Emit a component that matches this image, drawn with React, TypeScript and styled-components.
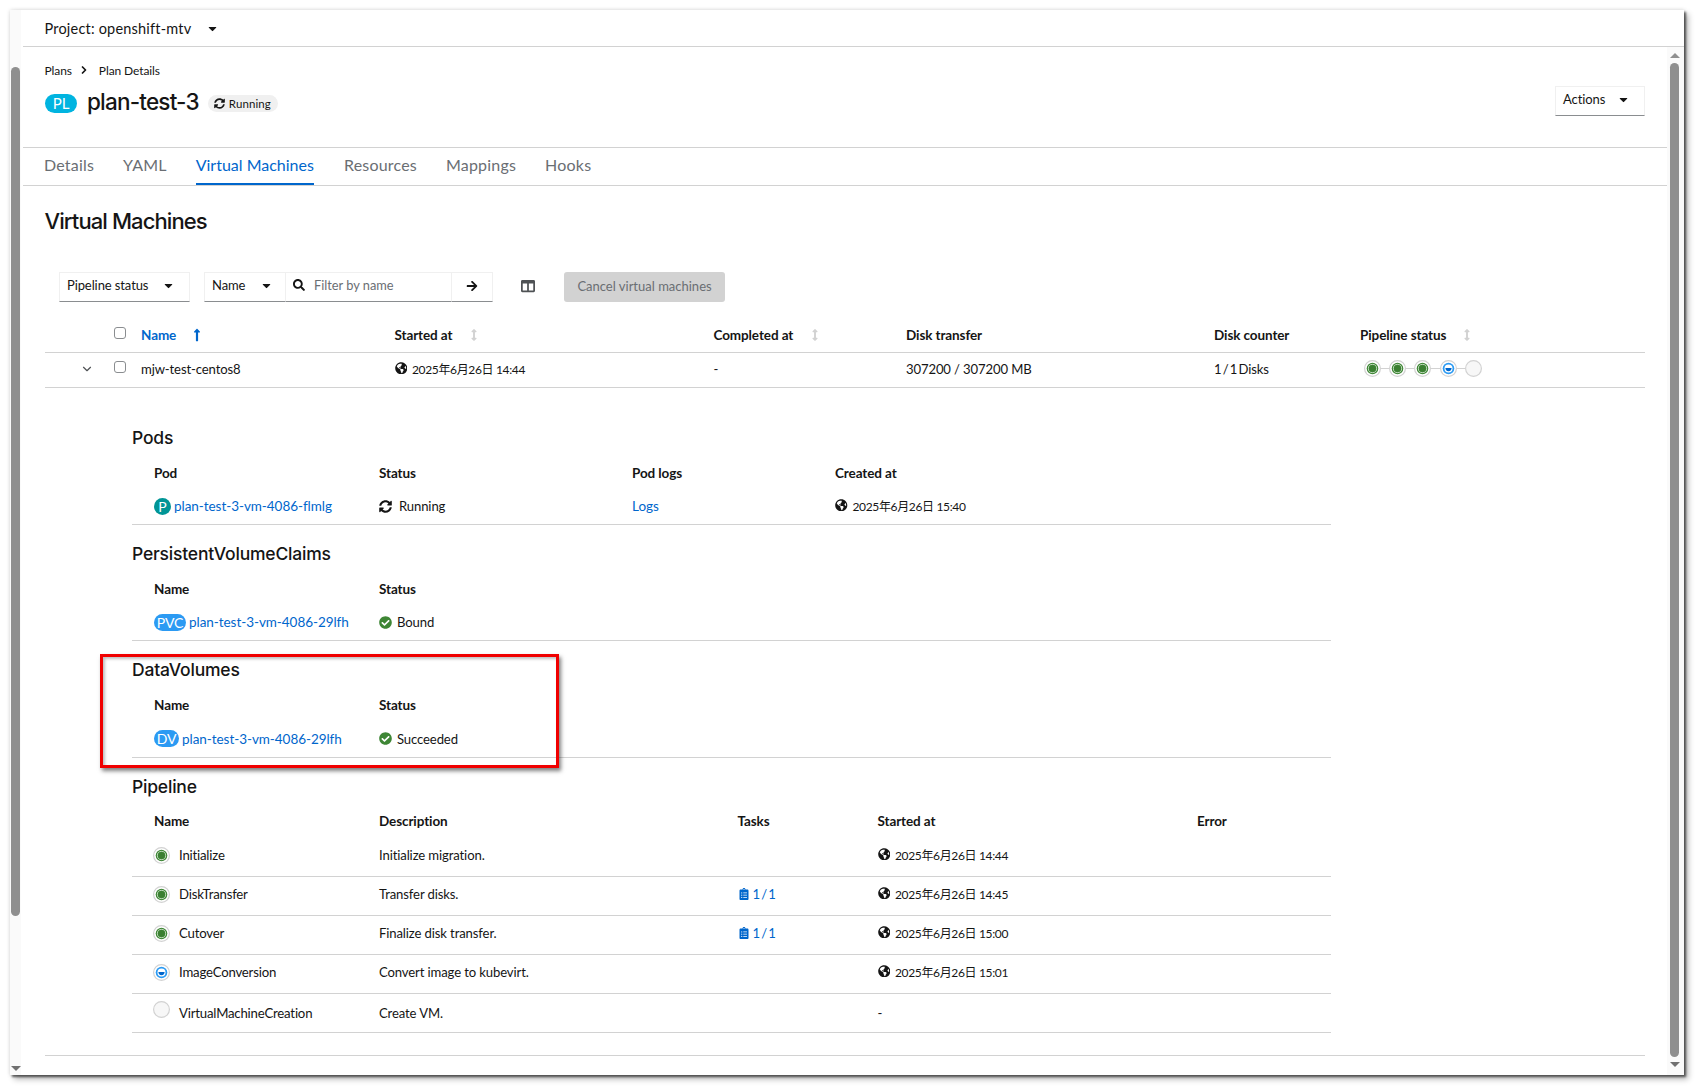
import React from "react";
import styled, { createGlobalStyle } from "styled-components";
import {
  FaArrowRight,
  FaArrowsAltV,
  FaCaretDown,
  FaCheckCircle,
  FaClipboardList,
  FaColumns,
  FaGlobeAmericas,
  FaLongArrowAltUp,
  FaSearch,
  FaSyncAlt,
} from "react-icons/fa";
import { LuChevronDown, LuChevronRight } from "react-icons/lu";

const BODY_FONT = `"Lato", "Noto Sans CJK JP", sans-serif`;
const BLUE = "#0066cc";
const LINE = "#d2d2d2";

const GlobalStyle = createGlobalStyle`
  html, body {
    margin: 0;
    background: #fff;
    overflow: hidden;
  }
  body {
    font-family: ${BODY_FONT};
    font-size: 14px;
    color: #151515;
  }
`;

const Screen = styled.div`
  width: 1695px;
  height: 1086px;
  padding: 10px 0 0 10px;
  box-sizing: border-box;
`;

const Card = styled.div`
  display: flex;
  width: 1674px;
  height: 1065px;
  background: #fff;
  box-shadow: 2px 2px 2px rgba(0, 0, 0, 0.55), 4px 4px 6px rgba(0, 0, 0, 0.3), 0 0 4px rgba(0, 0, 0, 0.15);
`;

const LeftRail = styled.div`
  display: flex;
  flex-direction: column;
  align-items: center;
  width: 11px;
  margin-right: 2px;
  padding-top: 57px;
  background: #fafafa;
`;

const RightRail = styled.div`
  display: flex;
  flex-direction: column;
  align-items: center;
  width: 17px;
  padding: 6px 5px 0 3px;
  box-sizing: border-box;
  background: #fafafa;
`;

const Thumb = styled.div<{ $height: number }>`
  flex: none;
  width: 9px;
  height: ${(p) => p.$height}px;
  border-radius: 5px;
  background: #8f8f8f;
`;

const ArrowUp = styled.div`
  width: 0;
  height: 0;
  margin-bottom: 5px;
  border-left: 5px solid transparent;
  border-right: 5px solid transparent;
  border-bottom: 5px solid #8f8f8f;
`;

const ArrowDown = styled.div<{ $gap: number }>`
  width: 0;
  height: 0;
  margin-top: ${(p) => p.$gap}px;
  border-left: 5px solid transparent;
  border-right: 5px solid transparent;
  border-top: 5px solid #707070;
`;

const Column = styled.div`
  display: flex;
  flex-direction: column;
  flex: 1;
  min-width: 0;
`;

const ProjectBar = styled.div`
  display: flex;
  align-items: center;
  height: 36px;
  padding: 0 22px 0 21.5px;
  border-bottom: 1px solid ${LINE};
  font-size: 14.5px;
  letter-spacing: 0.2px;
`;

const ProjectCaret = styled(FaCaretDown)`
  margin-left: 15px;
  font-size: 13px;
`;

const Body = styled.div`
  display: flex;
  flex: 1;
  min-height: 0;
`;

const Content = styled.main`
  flex: 1;
  min-width: 0;
`;

const PageHead = styled.header`
  display: flex;
  justify-content: space-between;
  height: 100px;
  padding: 0 22px 0 21.5px;
  box-sizing: border-box;
`;

const Breadcrumb = styled.nav`
  display: flex;
  align-items: center;
  height: 16px;
  margin-top: 15px;
  font-size: 12px;
  letter-spacing: -0.1px;
`;

const Crumb = styled(LuChevronRight)`
  margin: 0 9px 0 6px;
  font-size: 12px;
  stroke-width: 3.5;
`;

const TitleRow = styled.div`
  display: flex;
  align-items: center;
  height: 30px;
  margin-top: 9px;
`;

const Badge = styled.span<{ $bg: string; $width: number; $height: number; $size: number }>`
  display: inline-flex;
  flex: none;
  align-items: center;
  justify-content: center;
  box-sizing: border-box;
  width: ${(p) => p.$width}px;
  height: ${(p) => p.$height}px;
  border-radius: 10px;
  background: ${(p) => p.$bg};
  color: #fff;
  font-size: ${(p) => p.$size}px;
`;

const TitleBadge = styled(Badge)`
  margin-top: 2px;
  margin-left: 0.5px;
`;

const Title = styled.h1`
  margin: 0 9px 0 10px;
  font-family: "Inter", sans-serif;
  font-size: 22.5px;
  font-weight: 500;
  letter-spacing: -0.8px;
  line-height: 30px;
`;

const StatusPill = styled.span`
  display: inline-flex;
  align-items: center;
  gap: 4px;
  height: 17px;
  margin-top: 2px;
  padding: 0 7px 0 6px;
  border-radius: 9px;
  background: #f0f0f0;
  font-size: 11.5px;
  letter-spacing: 0.1px;
`;

const SelectBox = styled.div<{ $width: number; $right?: number }>`
  display: flex;
  align-items: center;
  justify-content: space-between;
  box-sizing: border-box;
  width: ${(p) => p.$width}px;
  height: 30px;
  padding: 0 ${(p) => p.$right ?? 14}px 4px 7px;
  border: 1px solid #f0f0f0;
  border-bottom-color: #8a8d90;
  background: #fff;
  font-size: 13px;
  letter-spacing: -0.1px;
`;

const ActionsBox = styled(SelectBox)`
  margin-top: 39px;
`;

const Tabs = styled.div`
  display: flex;
  height: 37px;
  padding-left: 6.5px;
  border-top: 1px solid ${LINE};
  border-bottom: 1px solid ${LINE};
`;

const Tab = styled.div<{ $active?: boolean }>`
  display: flex;
  align-items: center;
  margin: 0 ${(p) => (p.$active ? 15.5 : 14.5)}px 0 14.5px;
  padding-bottom: 3px;
  box-sizing: border-box;
  height: 37px;
  border-bottom: 2px solid ${(p) => (p.$active ? BLUE : "transparent")};
  color: ${(p) => (p.$active ? BLUE : "#6a6e73")};
  font-size: 16px;
  letter-spacing: ${(p) => (p.$active ? "0" : "0.2px")};
`;

const Section = styled.section`
  padding: 20px 22px 0 22px;
`;

const PageTitle = styled.h2`
  margin: 0 0 0 -0.5px;
  font-family: "Inter", sans-serif;
  font-size: 22px;
  font-weight: 500;
  letter-spacing: -0.9px;
  line-height: 30px;
`;

const Toolbar = styled.div`
  display: flex;
  align-items: center;
  margin: 36px 0 0 14px;
`;

const SearchGroup = styled.div`
  display: flex;
  margin-left: 14px;
`;

const SearchField = styled.div`
  display: flex;
  align-items: center;
  box-sizing: border-box;
  width: 165px;
  height: 30px;
  padding: 0 0 4px 7px;
  border-top: 1px solid #f0f0f0;
  border-bottom: 1px solid #8a8d90;
  color: #6a6e73;
  font-size: 12.8px;
`;

const SearchIcon = styled(FaSearch)`
  margin-right: 9px;
  color: #151515;
  font-size: 12px;
`;

const GoButton = styled.div`
  display: flex;
  align-items: center;
  justify-content: center;
  box-sizing: border-box;
  width: 42px;
  height: 30px;
  padding-bottom: 3px;
  border: 1px solid #f0f0f0;
  border-bottom-color: #8a8d90;
  font-size: 12px;
`;

const ColumnsIcon = styled(FaColumns)`
  margin: 0 29px 3px 28px;
  color: #4f5255;
  font-size: 14px;
`;

const CancelButton = styled.div`
  display: flex;
  align-items: center;
  justify-content: center;
  width: 161px;
  height: 30px;
  padding-bottom: 3px;
  box-sizing: border-box;
  border-radius: 3px;
  background: #d2d2d2;
  color: #6a6e73;
  font-size: 13px;
`;

const TableRow = styled.div<{
  $cols: string;
  $height: number;
  $border?: boolean;
  $pad?: number;
  $lift?: number;
}>`
  display: grid;
  grid-template-columns: ${(p) => p.$cols};
  align-items: center;
  box-sizing: content-box;
  height: ${(p) => p.$height}px;
  padding-top: ${(p) => p.$pad ?? 0}px;
  padding-bottom: ${(p) => p.$lift ?? 0}px;
  border-bottom: ${(p) => (p.$border ? `1px solid ${LINE}` : "none")};
`;

const HeaderCell = styled.div<{ $active?: boolean }>`
  display: flex;
  align-items: center;
  color: ${(p) => (p.$active ? BLUE : "#151515")};
  font-weight: 700;
  font-size: 13.5px;
  letter-spacing: -0.1px;
`;

const BodyCell = styled.div`
  display: flex;
  align-items: center;
  font-size: 13.1px;
  letter-spacing: -0.12px;
`;

const ExpandCell = styled.div`
  display: flex;
  justify-content: flex-end;
  padding-right: 20.5px;
  font-size: 14px;
  color: #4f5255;
`;

const CheckCell = styled.div`
  display: flex;
  align-items: center;
  margin: -4px 0 0 -0.5px;
`;

const CheckBox = styled.span`
  display: block;
  box-sizing: border-box;
  width: 12px;
  height: 12px;
  border: 1px solid #8a8d90;
  border-radius: 3px;
  background: #fff;
`;

const SortedIcon = styled(FaLongArrowAltUp)`
  margin-left: 14px;
  font-size: 14px;
`;

const SortIcon = styled(FaArrowsAltV)<{ $gap: number }>`
  margin-left: ${(p) => p.$gap}px;
  color: #d2d2d2;
  font-size: 12px;
`;

const DateStamp = styled.span`
  display: inline-flex;
  align-items: center;
  gap: 5px;
  margin-bottom: 2px;
  font-size: 12px;
  letter-spacing: -0.35px;
`;

const GlobeIcon = styled(FaGlobeAmericas)`
  font-size: 12.5px;
`;

const DiskCount = styled.span`
  word-spacing: -2px;
`;

const StepTrack = styled.div`
  display: flex;
  align-items: center;
  margin: -2px 0 0 4px;
`;

const StepLink = styled.span`
  width: 8.2px;
  height: 1px;
  background: ${LINE};
`;

const Details = styled.div`
  margin-left: 87px;
  width: 1199px;
  padding-top: 21px;
`;

const SubSection = styled.section`
  position: relative;
  padding-top: 16px;
`;

const SubTitle = styled.h3`
  margin: 0 0 7px 0;
  font-family: "Inter", sans-serif;
  font-size: 17.5px;
  font-weight: 500;
  letter-spacing: -0.2px;
  line-height: 26px;
`;

const SubRow = styled(TableRow)`
  padding-left: 22px;
`;

const LinkText = styled.a<{ $gap?: number }>`
  margin-left: ${(p) => p.$gap ?? 3}px;
  color: ${BLUE};
  font-size: 13.5px;
  text-decoration: none;
  letter-spacing: -0.05px;
`;

const Spaced = styled.span<{ $gap: number }>`
  display: inline-flex;
  align-items: center;
  gap: ${(p) => p.$gap}px;
`;

const TaskCount = styled.span`
  display: inline-flex;
  align-items: center;
  gap: 3px;
  color: ${BLUE};
  word-spacing: -2px;
`;

const StepCell = styled.div`
  display: flex;
  align-items: center;
  gap: 9px;
  margin-left: -1px;
  font-size: 13.2px;
  letter-spacing: -0.2px;
`;

const StepIconWrap = styled.span<{ $raise: number }>`
  display: flex;
  margin-top: ${(p) => -p.$raise}px;
`;

const Highlight = styled.div`
  position: absolute;
  top: 13px;
  left: -32px;
  width: 459px;
  height: 114px;
  box-sizing: border-box;
  border: 3px solid #f00000;
  box-shadow: 2px 3px 4px rgba(0, 0, 0, 0.5), inset 2px 2px 3px rgba(0, 0, 0, 0.25);
  pointer-events: none;
`;

const BottomLine = styled.div`
  margin: 22px 22px 0 22px;
  border-bottom: 1px solid ${LINE};
`;

type StepState = "done" | "running" | "pending";

function StepDot({ state }: { state: StepState }) {
  const color = state === "running" ? "#2b9af3" : "#3e8635";
  return (
    <svg width="17" height="17" viewBox="0 0 17 17">
      <circle
        cx="8.5"
        cy="8.5"
        r="7.9"
        fill={state === "pending" ? "#f7f7f7" : "#fff"}
        stroke="#d2d2d2"
        strokeWidth="1.2"
      />
      {state !== "pending" && <circle cx="8.5" cy="8.5" r="5.8" fill={color} />}
      {state === "done" && (
        <>
          <circle cx="8.5" cy="8.5" r="4.1" fill="none" stroke="#dfeedd" strokeWidth="0.8" />
          <circle cx="8.5" cy="8.5" r="3.3" fill="#3a7f31" />
        </>
      )}
      {state === "running" && (
        <>
          <circle cx="8.5" cy="8.5" r="4" fill="#fff" />
          <path d="M5.4 8.1h6.2a3.1 3.1 0 0 1-6.2 0z" fill={BLUE} />
        </>
      )}
    </svg>
  );
}

function Stamp({ text }: { text: string }) {
  return (
    <DateStamp>
      <GlobeIcon />
      {text}
    </DateStamp>
  );
}

const steps: { name: string; desc: string; state: StepState; tasks?: string; started: string }[] = [
  { name: "Initialize", desc: "Initialize migration.", state: "done", started: "2025年6月26日 14:44" },
  { name: "DiskTransfer", desc: "Transfer disks.", state: "done", tasks: "1 / 1", started: "2025年6月26日 14:45" },
  { name: "Cutover", desc: "Finalize disk transfer.", state: "done", tasks: "1 / 1", started: "2025年6月26日 15:00" },
  { name: "ImageConversion", desc: "Convert image to kubevirt.", state: "running", started: "2025年6月26日 15:01" },
  { name: "VirtualMachineCreation", desc: "Create VM.", state: "pending", started: "-" },
];

const VM_COLS = "69.5px 26.5px 253.5px 319px 192.5px 308px 146px 285px";
const POD_COLS = "225px 253px 203px 1fr";
const NAME_COLS = "225px 1fr";
const PIPE_COLS = "225px 358.5px 140px 319.5px 1fr";

export default function App() {
  return (
    <Screen>
      <GlobalStyle />
      <Card>
        <LeftRail>
          <Thumb $height={849} />
          <ArrowDown $gap={150} />
        </LeftRail>
        <Column>
          <ProjectBar>
            Project: openshift-mtv
            <ProjectCaret />
          </ProjectBar>
          <Body>
            <Content>
              <PageHead>
                <div>
                  <Breadcrumb>
                    Plans
                    <Crumb />
                    Plan Details
                  </Breadcrumb>
                  <TitleRow>
                    <TitleBadge $bg="#00b4e0" $width={32} $height={19} $size={15}>
                      PL
                    </TitleBadge>
                    <Title>plan-test-3</Title>
                    <StatusPill>
                      <FaSyncAlt size={11} />
                      Running
                    </StatusPill>
                  </TitleRow>
                </div>
                <ActionsBox $width={90} $right={14}>
                  Actions
                  <FaCaretDown size={13} />
                </ActionsBox>
              </PageHead>

              <Tabs>
                <Tab>Details</Tab>
                <Tab>YAML</Tab>
                <Tab $active>Virtual Machines</Tab>
                <Tab>Resources</Tab>
                <Tab>Mappings</Tab>
                <Tab>Hooks</Tab>
              </Tabs>

              <Section>
                <PageTitle>Virtual Machines</PageTitle>
                <Toolbar>
                  <SelectBox $width={131}>
                    Pipeline status
                    <FaCaretDown size={13} />
                  </SelectBox>
                  <SearchGroup>
                    <SelectBox $width={82} $right={12}>
                      Name
                      <FaCaretDown size={13} />
                    </SelectBox>
                    <SearchField>
                      <SearchIcon />
                      Filter by name
                    </SearchField>
                    <GoButton>
                      <FaArrowRight />
                    </GoButton>
                  </SearchGroup>
                  <ColumnsIcon />
                  <CancelButton>Cancel virtual machines</CancelButton>
                </Toolbar>

                <TableRow $cols={VM_COLS} $height={31} $pad={17} $lift={2} $border>
                  <div />
                  <CheckCell>
                    <CheckBox />
                  </CheckCell>
                  <HeaderCell $active>
                    Name
                    <SortedIcon />
                  </HeaderCell>
                  <HeaderCell>
                    Started at
                    <SortIcon $gap={16} />
                  </HeaderCell>
                  <HeaderCell>
                    Completed at
                    <SortIcon $gap={16} />
                  </HeaderCell>
                  <HeaderCell>Disk transfer</HeaderCell>
                  <HeaderCell>Disk counter</HeaderCell>
                  <HeaderCell>
                    Pipeline status
                    <SortIcon $gap={15} />
                  </HeaderCell>
                </TableRow>

                <TableRow $cols={VM_COLS} $height={32} $lift={2} $border>
                  <ExpandCell>
                    <LuChevronDown />
                  </ExpandCell>
                  <CheckCell>
                    <CheckBox />
                  </CheckCell>
                  <BodyCell>mjw-test-centos8</BodyCell>
                  <BodyCell>
                    <Stamp text="2025年6月26日 14:44" />
                  </BodyCell>
                  <BodyCell>-</BodyCell>
                  <BodyCell>307200 / 307200 MB</BodyCell>
                  <BodyCell>
                    <DiskCount>1 / 1 Disks</DiskCount>
                  </BodyCell>
                  <StepTrack>
                    <StepDot state="done" />
                    <StepLink />
                    <StepDot state="done" />
                    <StepLink />
                    <StepDot state="done" />
                    <StepLink />
                    <StepDot state="running" />
                    <StepLink />
                    <StepDot state="pending" />
                  </StepTrack>
                </TableRow>

                <Details>
                  <SubSection>
                    <SubTitle>Pods</SubTitle>
                    <SubRow $cols={POD_COLS} $height={30}>
                      <HeaderCell>Pod</HeaderCell>
                      <HeaderCell>Status</HeaderCell>
                      <HeaderCell>Pod logs</HeaderCell>
                      <HeaderCell>Created at</HeaderCell>
                    </SubRow>
                    <SubRow $cols={POD_COLS} $height={36} $border>
                      <BodyCell>
                        <Badge $bg="#009596" $width={17} $height={17} $size={14}>
                          P
                        </Badge>
                        <LinkText>plan-test-3-vm-4086-flmlg</LinkText>
                      </BodyCell>
                      <BodyCell>
                        <Spaced $gap={7}>
                          <FaSyncAlt size={13} />
                          Running
                        </Spaced>
                      </BodyCell>
                      <BodyCell>
                        <LinkText $gap={0}>Logs</LinkText>
                      </BodyCell>
                      <BodyCell>
                        <Stamp text="2025年6月26日 15:40" />
                      </BodyCell>
                    </SubRow>
                  </SubSection>

                  <SubSection>
                    <SubTitle>PersistentVolumeClaims</SubTitle>
                    <SubRow $cols={NAME_COLS} $height={30}>
                      <HeaderCell>Name</HeaderCell>
                      <HeaderCell>Status</HeaderCell>
                    </SubRow>
                    <SubRow $cols={NAME_COLS} $height={36} $border>
                      <BodyCell>
                        <Badge $bg="#2b9af3" $width={32} $height={17} $size={14}>
                          PVC
                        </Badge>
                        <LinkText>plan-test-3-vm-4086-29lfh</LinkText>
                      </BodyCell>
                      <BodyCell>
                        <Spaced $gap={5}>
                          <FaCheckCircle size={13} color="#3e8635" />
                          Bound
                        </Spaced>
                      </BodyCell>
                    </SubRow>
                  </SubSection>

                  <SubSection>
                    <Highlight />
                    <SubTitle>DataVolumes</SubTitle>
                    <SubRow $cols={NAME_COLS} $height={30}>
                      <HeaderCell>Name</HeaderCell>
                      <HeaderCell>Status</HeaderCell>
                    </SubRow>
                    <SubRow $cols={NAME_COLS} $height={37} $border>
                      <BodyCell>
                        <Badge $bg="#2b9af3" $width={25} $height={17} $size={14}>
                          DV
                        </Badge>
                        <LinkText>plan-test-3-vm-4086-29lfh</LinkText>
                      </BodyCell>
                      <BodyCell>
                        <Spaced $gap={5}>
                          <FaCheckCircle size={13} color="#3e8635" />
                          Succeeded
                        </Spaced>
                      </BodyCell>
                    </SubRow>
                  </SubSection>

                  <SubSection>
                    <SubTitle>Pipeline</SubTitle>
                    <SubRow $cols={PIPE_COLS} $height={28} $lift={3}>
                      <HeaderCell>Name</HeaderCell>
                      <HeaderCell>Description</HeaderCell>
                      <HeaderCell>Tasks</HeaderCell>
                      <HeaderCell>Started at</HeaderCell>
                      <HeaderCell>Error</HeaderCell>
                    </SubRow>
                    {steps.map((step) => {
                      const pending = step.state === "pending";
                      return (
                        <SubRow
                          key={step.name}
                          $cols={PIPE_COLS}
                          $height={pending ? 38 : 34}
                          $lift={pending ? 0 : 4}
                          $border
                        >
                          <StepCell>
                            <StepIconWrap $raise={pending ? 7 : 0}>
                              <StepDot state={step.state} />
                            </StepIconWrap>
                            {step.name}
                          </StepCell>
                          <BodyCell>{step.desc}</BodyCell>
                          <BodyCell>
                            {step.tasks && (
                              <TaskCount>
                                <FaClipboardList size={12} />
                                {step.tasks}
                              </TaskCount>
                            )}
                          </BodyCell>
                          <BodyCell>
                            {step.started === "-" ? "-" : <Stamp text={step.started} />}
                          </BodyCell>
                          <div />
                        </SubRow>
                      );
                    })}
                  </SubSection>
                </Details>
              </Section>
              <BottomLine />
            </Content>
            <RightRail>
              <ArrowUp />
              <Thumb $height={994} />
              <ArrowDown $gap={5} />
            </RightRail>
          </Body>
        </Column>
      </Card>
    </Screen>
  );
}
